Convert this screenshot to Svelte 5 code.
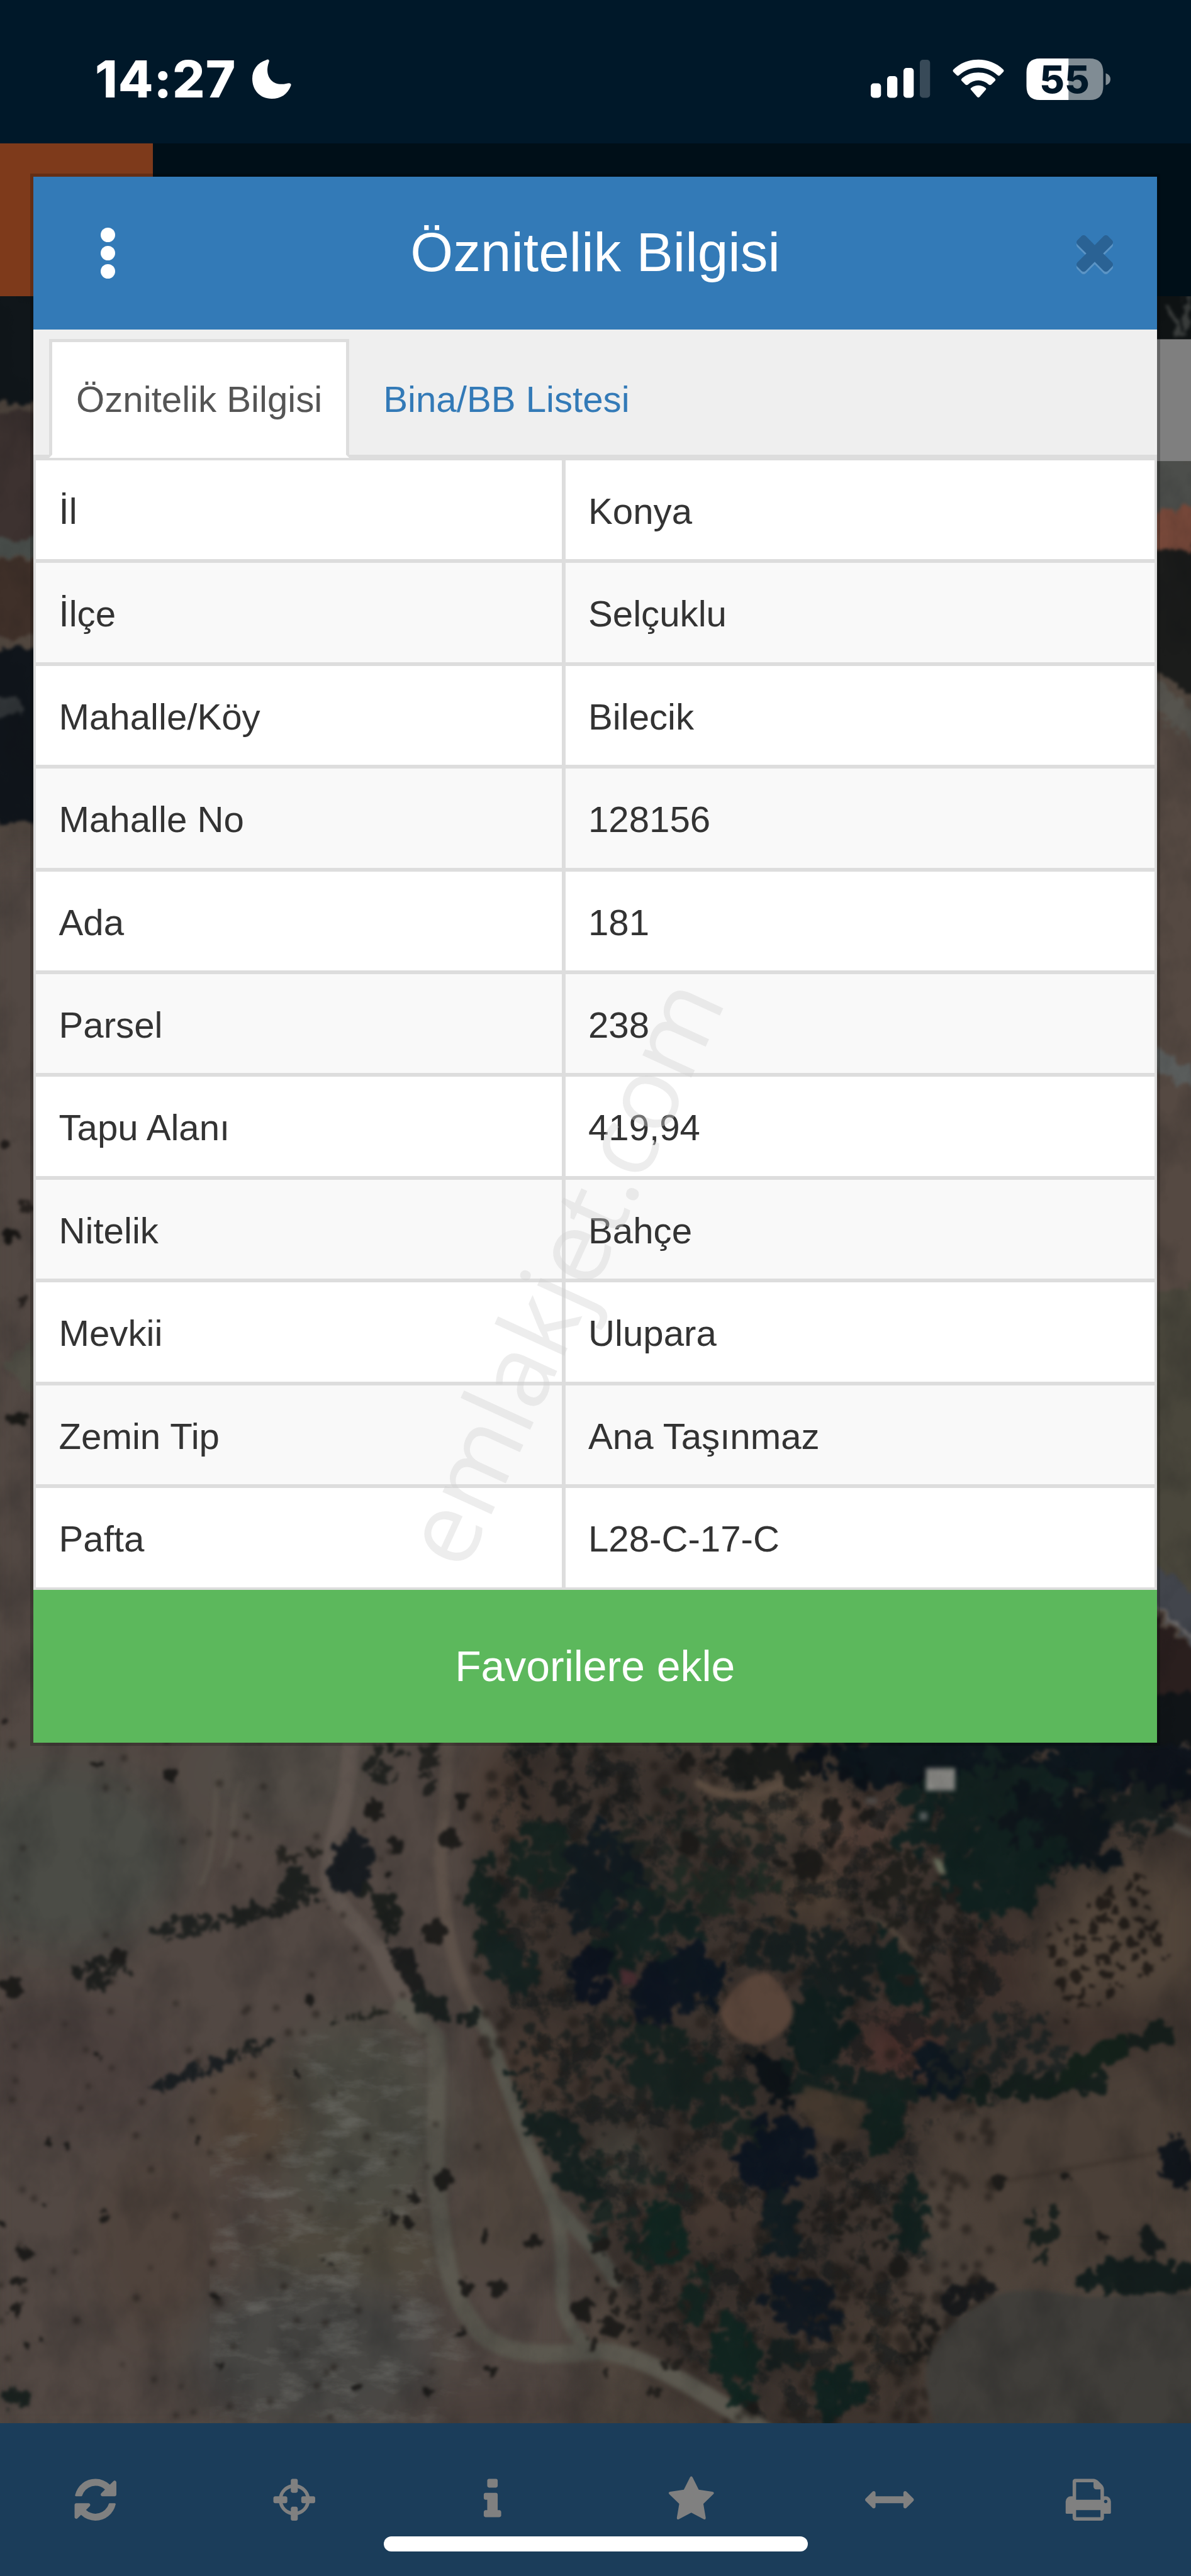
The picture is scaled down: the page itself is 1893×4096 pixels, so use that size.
<script>
    const rows = [
        { label: 'İl', value: 'Konya' },
        { label: 'İlçe', value: 'Selçuklu' },
        { label: 'Mahalle/Köy', value: 'Bilecik' },
        { label: 'Mahalle No', value: '128156' },
        { label: 'Ada', value: '181' },
        { label: 'Parsel', value: '238' },
        { label: 'Tapu Alanı', value: '419,94' },
        { label: 'Nitelik', value: 'Bahçe' },
        { label: 'Mevkii', value: 'Ulupara' },
        { label: 'Zemin Tip', value: 'Ana Taşınmaz' },
        { label: 'Pafta', value: 'L28-C-17-C' }
    ];

    const tools = [
        { name: 'refresh', d: 'M1639 1056q0 5-1 7-64 268-268 434.5t-478 166.5q-146 0-282.5-55t-243.5-157l-129 129q-19 19-45 19t-45-19-19-45v-448q0-26 19-45t45-19h448q26 0 45 19t19 45-19 45l-137 137q71 66 161 102t187 36q134 0 250-65t186-179q11-17 53-117 8-23 30-23h192q13 0 22.5 9.5t9.5 22.5zm25-800v448q0 26-19 45t-45 19h-448q-26 0-45-19t-19-45 19-45l138-138q-148-137-349-137-134 0-250 65t-186 179q-11 17-53 117-8 23-30 23h-199q-13 0-22.5-9.5t-9.5-22.5v-7q65-268 270-434.5t480-166.5q146 0 284 55.5t245 156.5l130-129q19-19 45-19t45 19 19 45z' },
        { name: 'locate', d: 'M1325 1024h-109q-26 0-45-19t-19-45v-128q0-26 19-45t45-19h109q-32-108-112.5-188.5t-188.5-112.5v109q0 26-19 45t-45 19h-128q-26 0-45-19t-19-45v-109q-108 32-188.5 112.5t-112.5 188.5h109q26 0 45 19t19 45v128q0 26-19 45t-45 19h-109q32 108 112.5 188.5t188.5 112.5v-109q0-26 19-45t45-19h128q26 0 45 19t19 45v109q108-32 188.5-112.5t112.5-188.5zm339-192v128q0 26-19 45t-45 19h-143q-37 161-154.5 278.5t-278.5 154.5v143q0 26-19 45t-45 19h-128q-26 0-45-19t-19-45v-143q-161-37-278.5-154.5t-154.5-278.5h-143q-26 0-45-19t-19-45v-128q0-26 19-45t45-19h143q37-161 154.5-278.5t278.5-154.5v-143q0-26 19-45t45-19h128q26 0 45 19t19 45v143q161 37 278.5 154.5t154.5 278.5h143q26 0 45 19t19 45z' },
        { name: 'info', d: 'M1216 1344v128q0 26-19 45t-45 19h-512q-26 0-45-19t-19-45v-128q0-26 19-45t45-19h64v-384h-64q-26 0-45-19t-19-45v-128q0-26 19-45t45-19h384q26 0 45 19t19 45v576h64q26 0 45 19t19 45zm-128-1152v192q0 26-19 45t-45 19h-256q-26 0-45-19t-19-45v-192q0-26 19-45t45-19h256q26 0 45 19t19 45z' },
        { name: 'favorites', d: 'M1728 647q0 22-26 48l-363 354 86 500q1 7 1 20 0 21-10.5 35.5t-30.5 14.5q-19 0-40-12l-449-236-449 236q-22 12-40 12-21 0-31.5-14.5t-10.5-35.5q0-6 2-20l86-500-364-354q-25-27-25-48 0-37 56-46l502-73 225-455q19-41 49-41t49 41l225 455 502 73q56 9 56 46z' },
        { name: 'measure', d: 'M1792 896q0 26-19 45l-256 256q-19 19-45 19t-45-19-19-45v-128h-1024v128q0 26-19 45t-45 19-45-19l-256-256q-19-19-19-45t19-45l256-256q19-19 45-19t45 19 19 45v128h1024v-128q0-26 19-45t45-19 45 19l256 256q19 19 19 45z' },
        { name: 'print', d: 'M448 1536h896v-256h-896v256zm0-640h896v-384h-160q-40 0-68-28t-28-68v-160h-640v640zm1152 64q0-26-19-45t-45-19-45 19-19 45 19 45 45 19 45-19 19-45zm128 0v416q0 13-9.5 22.5t-22.5 9.5h-224v160q0 40-28 68t-68 28h-960q-40 0-68-28t-28-68v-160h-224q-13 0-22.5-9.5t-9.5-22.5v-416q0-79 56.5-135.5t135.5-56.5h64v-544q0-40 28-68t68-28h672q40 0 88 20t76 48l152 152q28 28 48 76t20 88v256h64q79 0 135.5 56.5t56.5 135.5z' }
    ];

    // small seeded generator so the trees are always in the same place
    let seed = 41;
    function random() {
        seed = (seed * 16807) % 2147483647;
        return seed / 2147483647;
    }

    // groves: [cx, cy, rx, ry, angle, count, size, colour]
    const groves = [
        // garden belt east of the tracks
        [1020, 3210, 130, 110, 0, 50, 10, '#1b1c1b'],
        [870, 3400, 22, 90, -5, 44, 14, '#15231f'],
        [915, 3520, 34, 70, -35, 44, 15, '#142220'],
        [970, 3320, 60, 60, 10, 44, 14, '#15231f'],
        [1080, 3370, 70, 100, -10, 90, 17, '#101a20'],
        [1150, 3450, 90, 80, 0, 70, 16, '#122220'],
        [1055, 3535, 34, 44, 0, 40, 16, '#0b121e'],
        [1170, 3570, 40, 50, 0, 44, 16, '#0c1420'],
        [1245, 3540, 44, 60, 0, 50, 17, '#0b1520'],
        [1080, 3700, 150, 110, 30, 80, 9, '#1f2220'],
        [1010, 3850, 30, 140, -32, 80, 14, '#14211f'],
        [1230, 3720, 140, 60, 35, 110, 16, '#15221f'],
        [1390, 3860, 55, 60, -10, 84, 18, '#0b1420'],
        [1390, 3980, 30, 50, 0, 40, 14, '#101c20'],
        [1130, 3930, 90, 80, 0, 50, 10, '#1c2723'],
        [1190, 4000, 32, 50, -20, 38, 13, '#0f2620'],
        [1145, 4030, 22, 24, 0, 18, 12, '#14241f'],
        [1245, 4110, 20, 60, 8, 34, 12, '#12241f'],
        [1320, 4220, 38, 75, -18, 60, 15, '#0f241f'],
        [1430, 4120, 62, 50, 20, 66, 16, '#0e1720'],
        [1502, 4280, 42, 40, 0, 50, 14, '#0f221f'],
        [1405, 4215, 32, 25, 0, 24, 12, '#151f1e'],
        [1460, 4080, 220, 150, 0, 80, 7, '#231f1c'],
        [1540, 3960, 100, 90, 0, 34, 8, '#1e1d1a'],
        [1160, 4150, 110, 110, 0, 50, 9, '#211f1c'],
        [1480, 3500, 120, 60, 10, 100, 14, '#161f1f'],
        [1610, 3530, 26, 70, -28, 46, 14, '#0f201e'],
        [1460, 3640, 42, 60, 30, 60, 17, '#0e1d1c'],
        [1380, 3720, 16, 50, -35, 28, 13, '#0b1217'],
        [1540, 3735, 110, 24, 5, 60, 14, '#13201e'],
        [1680, 3710, 40, 44, 0, 44, 16, '#0c1720'],
        [1585, 3790, 32, 55, 10, 44, 15, '#10221e'],
        [1630, 3980, 26, 62, 0, 40, 14, '#12221f'],
        // dense wood in the north east
        [1600, 3145, 130, 36, 0, 90, 18, '#0a1018'],
        [1800, 3150, 260, 60, 0, 220, 22, '#0b151c'],
        [1790, 3250, 160, 90, 0, 190, 18, '#10211f'],
        [1900, 3270, 100, 80, 0, 90, 18, '#0c141a'],
        [1780, 3350, 110, 70, -15, 110, 17, '#0e201e'],
        [2070, 3160, 80, 50, 30, 80, 18, '#0b111a'],
        [2030, 3230, 90, 40, 10, 50, 13, '#151d1d'],
        [1370, 3155, 90, 30, 0, 50, 13, '#161918'],
        [1230, 3300, 130, 90, 0, 80, 10, '#1f2521'],
        [1290, 3380, 90, 40, 0, 50, 11, '#1f2a23'],
        [1600, 3370, 80, 60, 0, 60, 10, '#1f1f1b'],
        [1690, 3510, 60, 120, -10, 70, 9, '#1f1d1b'],
        [1780, 3660, 110, 70, 0, 70, 12, '#1e2423'],
        [1850, 3735, 120, 18, -4, 60, 13, '#121e1b'],
        [1950, 3690, 80, 16, -32, 60, 13, '#112019'],
        [2065, 3640, 36, 16, -20, 26, 12, '#131d1a'],
        [2110, 3870, 26, 36, 0, 30, 13, '#0d131a'],
        [2040, 4075, 90, 24, 0, 80, 15, '#101c1b'],
        [2055, 4020, 14, 26, 0, 14, 11, '#131a1a'],
        [1860, 3990, 34, 44, 0, 18, 11, '#171f1c'],
        [1720, 4110, 60, 16, -22, 24, 11, '#16181a'],
        [1640, 4190, 24, 56, 28, 24, 10, '#1b1b19'],
        // hedge lines on the western slope
        [630, 3340, 28, 50, -10, 50, 14, '#14191e'],
        [690, 3420, 18, 50, -35, 26, 11, '#1a1e1b'],
        [732, 3520, 18, 46, -28, 28, 11, '#1a1b1b'],
        [785, 3590, 50, 16, 22, 38, 12, '#181f1d'],
        [480, 3415, 80, 14, -10, 44, 10, '#1c1f1d'],
        [530, 3370, 30, 26, -10, 28, 11, '#1c201e'],
        [535, 3315, 30, 12, -10, 12, 9, '#24231f'],
        [330, 3450, 50, 18, -12, 24, 9, '#1e211f'],
        [180, 3525, 44, 26, -10, 26, 10, '#1d1f1d'],
        [340, 3710, 76, 9, -20, 40, 9, '#181d20'],
        [440, 3670, 38, 9, -18, 18, 8, '#1d201f'],
        [690, 3155, 34, 30, 0, 20, 10, '#1f211e'],
        [765, 3150, 16, 50, 0, 20, 10, '#22221f'],
        [640, 3610, 66, 7, -8, 18, 5, '#22241f'],
        [25, 4290, 22, 18, 0, 16, 9, '#17201d']
    ];

    const singles = [
        [305, 3172, 12], [173, 3157, 9], [18, 3554, 18], [213, 3502, 16], [668, 3235, 17],
        [806, 3292, 15], [826, 3226, 14], [775, 3459, 21], [707, 3304, 15], [695, 3352, 8],
        [552, 3578, 12], [178, 3679, 6], [530, 3711, 6], [356, 3826, 9], [83, 3829, 7],
        [122, 3837, 7], [792, 3900, 16], [743, 3932, 10], [728, 3975, 10], [701, 3968, 8],
        [870, 4000, 8], [959, 4007, 14], [836, 4089, 13], [890, 4094, 17], [1038, 4132, 20],
        [42, 4034, 12], [30, 4085, 8], [28, 4131, 9], [50, 4190, 8], [76, 4190, 6],
        [182, 3963, 7], [386, 4105, 7], [578, 4041, 5], [594, 4060, 5], [394, 4233, 6],
        [821, 4175, 8], [770, 4276, 10], [641, 4272, 9], [880, 4238, 8], [1095, 4165, 17],
        [1076, 4018, 13], [1444, 3336, 27], [1489, 3240, 19], [1395, 3333, 9], [1486, 3296, 9],
        [1226, 3155, 18], [1232, 3300, 20], [1262, 3214, 8], [1606, 4055, 16], [1498, 3848, 13],
        [1786, 3904, 11], [1907, 3896, 9], [1972, 4002, 8], [1554, 4182, 8], [1345, 4306, 12],
        [80, 3940, 6], [5, 3978, 9], [1550, 3250, 12], [1530, 3230, 10], [1575, 3265, 9]
    ];

    const trees = [];
    for (const [cx, cy, rx, ry, angle, count, size, fill] of groves) {
        const a = (angle * Math.PI) / 180;
        for (let i = 0; i < count; i++) {
            const t = random() * Math.PI * 2;
            const q = Math.sqrt(random()) * (0.7 + random() * 0.65);
            const dx = Math.cos(t) * q * rx;
            const dy = Math.sin(t) * q * ry;
            trees.push({
                x: Math.round(cx + dx * Math.cos(a) - dy * Math.sin(a)),
                y: Math.round(cy + dx * Math.sin(a) + dy * Math.cos(a)),
                r: Math.round(size * (0.35 + random() * 0.75)),
                fill
            });
        }
    }
    for (const [x, y, r] of singles) {
        trees.push({ x, y, r, fill: '#1b1a18' });
    }

    // orchard planted in slanted rows
    for (let i = 0; i < 6; i++) {
        for (let j = 0; j < 8; j++) {
            trees.push({
                x: Math.round(1866 + j * 24 + i * 8 + random() * 14),
                y: Math.round(3455 - j * 15 + i * 29 + random() * 14),
                r: Math.round(5 + random() * 6),
                fill: '#211c18'
            });
        }
    }

    // scrub, sparse on the fields and thick in the gardens
    const scrub = [];
    for (let i = 0; i < 110; i++) {
        scrub.push({ x: Math.round(random() * 860), y: Math.round(3110 + random() * 1230), r: Math.round(1 + random() * 3) });
    }
    for (let i = 0; i < 650; i++) {
        const y = 3110 + random() * 1230;
        const left = y < 3640 ? 850 : 850 + (y - 3640) * 0.62;
        const x = left + random() * (1780 - left);
        scrub.push({ x: Math.round(x), y: Math.round(y), r: Math.round(3 + random() * 6) });
    }
</script>

<div class="screen">
    <header class="status">
        <div class="clock">
            <span class="time">14:27</span>
            <svg class="moon" viewBox="0 0 62 63">
                <path d="M22 1.500C26-1 28 2 26 6C19 26 31 44 54 39C60 37 63 39 61 43C56 56 45 63 31 63C12 63 0 49 0 31C0 17 8 6 22 1.500Z" fill="#fff" />
            </svg>
        </div>
        <svg class="indicators" viewBox="0 0 382 68">
            <g fill="#fff">
                <rect x="0" y="40.500" width="16.300" height="23" rx="5" />
                <rect x="26" y="29" width="16.300" height="34.500" rx="5" />
                <rect x="52" y="16" width="16.300" height="47.500" rx="5" />
                <rect x="78" y="3" width="16.300" height="60.500" rx="5" opacity=".22" />
                <path d="M131.500 22.500Q129.500 20.500 131.500 18.500C153-2.500 189-2.500 210.500 18.500Q212.500 20.500 210.500 22.500L205.500 27.500Q203.500 29.500 201.500 27.500C184 11.500 158 11.500 140.500 27.500Q138.500 29.500 136.500 27.500Z" />
                <path d="M144.500 36.500Q143 34.500 145 32.500C159 20 183 20 197 32.500Q199 34.500 197.500 36.500L191.500 42.500Q189.500 44 187.500 42.500C178 33.500 164 33.500 154.500 42.500Q152.500 44 150.500 42.500Z" />
                <path d="M159.500 51Q157.500 49 160 47.500C167 42.500 175 42.500 182 47.500Q184.500 49 182.500 51L173 62Q171 64 169 62Z" />
                <path d="M269 1H314.500V67H269Q247.500 67 247.500 45V23Q247.500 1 269 1Z" />
                <path d="M314.500 1H348Q369.500 1 369.500 23V45Q369.500 67 348 67H314.500Z" opacity=".5" />
                <path d="M373.500 24.500Q381 27 381 34Q381 41 373.500 43.500Z" opacity=".5" />
            </g>
            <text x="308" y="56" text-anchor="middle" class="battery">55</text>
        </svg>
    </header>

    <div class="navbar">
        <div class="brand"></div>
    </div>

    <main class="map">
        <svg viewBox="0 529 2130 3806" preserveAspectRatio="none">
            <defs>
                <filter id="rough" x="-5%" y="-5%" width="110%" height="110%" color-interpolation-filters="sRGB">
                    <feTurbulence type="fractalNoise" baseFrequency="0.045" numOctaves="3" seed="4" result="n" />
                    <feDisplacementMap in="SourceGraphic" in2="n" scale="34" xChannelSelector="R" yChannelSelector="G" />
                    <feGaussianBlur stdDeviation="2.800" />
                </filter>
                <filter id="soft" x="-20%" y="-20%" width="140%" height="140%" color-interpolation-filters="sRGB">
                    <feGaussianBlur stdDeviation="38" />
                </filter>
                <filter id="edge" x="-20%" y="-20%" width="140%" height="140%" color-interpolation-filters="sRGB">
                    <feGaussianBlur stdDeviation="4" />
                </filter>
                <filter id="grain" x="0" y="0" width="100%" height="100%" color-interpolation-filters="sRGB">
                    <feTurbulence type="fractalNoise" baseFrequency="0.012 0.009" numOctaves="5" seed="9" />
                    <feColorMatrix values="0 0 0 0 0.04  0 0 0 0 0.05  0 0 0 0 0.06  1.6 0 0 0 -0.65" />
                </filter>
                <filter id="thicket" x="0" y="0" width="100%" height="100%" color-interpolation-filters="sRGB">
                    <feTurbulence type="fractalNoise" baseFrequency="0.02" numOctaves="4" seed="15" />
                    <feColorMatrix values="0 0 0 0 0.065  0 0 0 0 0.095  0 0 0 0 0.1  0 5 0 0 -2.5" result="c" />
                    <feGaussianBlur in="SourceAlpha" stdDeviation="14" result="m" />
                    <feComposite in="c" in2="m" operator="in" />
                </filter>
                <filter id="chalk" x="0" y="0" width="100%" height="100%" color-interpolation-filters="sRGB">
                    <feTurbulence type="fractalNoise" baseFrequency="0.014 0.032" numOctaves="5" seed="21" />
                    <feColorMatrix values="0 0 0 0 0.45  0 0 0 0 0.45  0 0 0 0 0.43  0 3 0 0 -1.450" result="c" />
                    <feGaussianBlur in="SourceAlpha" stdDeviation="20" result="m" />
                    <feComposite in="c" in2="m" operator="in" />
                </filter>
            </defs>

            <rect x="0" y="529" width="2130" height="3806" fill="#51473f" />

            <g filter="url(#soft)">
                <rect x="-60" y="1500" width="1100" height="2900" fill="#524843" />
                <ellipse cx="100" cy="3320" rx="230" ry="170" fill="#4b4c46" />
                <ellipse cx="500" cy="3170" rx="170" ry="110" fill="#524c46" />
                <ellipse cx="120" cy="3700" rx="200" ry="120" fill="#4c413e" />
                <ellipse cx="640" cy="3800" rx="160" ry="190" fill="#4c4b43" />
                <ellipse cx="450" cy="3790" rx="85" ry="90" fill="#524438" />
                <ellipse cx="640" cy="4030" rx="190" ry="60" fill="#4e483c" />
                <ellipse cx="560" cy="4210" rx="220" ry="150" fill="#484744" />
                <ellipse cx="280" cy="4010" rx="120" ry="170" fill="#4f433c" />
                <ellipse cx="910" cy="3900" rx="70" ry="180" fill="#4e443c" />
                <path d="M880 3100H2180V3800L1600 3900L1700 4400H1230L1120 4130L960 3780L850 3540Z" fill="#3c332e" />
                <ellipse cx="900" cy="3220" rx="60" ry="120" fill="#473931" />
                <ellipse cx="960" cy="3690" rx="90" ry="60" fill="#463830" />
                <ellipse cx="1400" cy="3220" rx="130" ry="60" fill="#52453a" />
                <ellipse cx="1540" cy="3290" rx="80" ry="70" fill="#533f37" />
                <ellipse cx="1450" cy="3390" rx="60" ry="40" fill="#564637" />
                <ellipse cx="1610" cy="3660" rx="80" ry="50" fill="#50302c" />
                <ellipse cx="1780" cy="3520" rx="80" ry="90" fill="#3e302b" />
                <path d="M1640 3800L1720 3750L2140 3640V4080H1870L1780 4120L1700 3960Z" fill="#4b4038" />
                <path d="M1830 3500L2000 3300L2150 3380V3540L1900 3650Z" fill="#53463b" />
                <ellipse cx="1960" cy="3630" rx="100" ry="26" fill="#3b2c28" />
                <ellipse cx="1270" cy="3950" rx="80" ry="90" fill="#443730" />
                <ellipse cx="1560" cy="4200" rx="100" ry="90" fill="#453a32" />
                <ellipse cx="1110" cy="3860" rx="50" ry="50" fill="#4b4a42" />
                <ellipse cx="1180" cy="4330" rx="200" ry="40" fill="#473e37" />
                <ellipse cx="900" cy="4320" rx="160" ry="36" fill="#463c38" />
            </g>

            <path d="M880 3110H1500L1700 3120L2130 3120V3280L1850 3400L1830 3740L1640 3820L1660 4080L1600 4335H1330L1110 4080L950 3740L860 3520Z" filter="url(#thicket)" opacity=".6" />

            <g fill="none" stroke-linecap="round" filter="url(#edge)">
                <path d="M628 3080C630 3210 596 3270 587 3347C588 3400 640 3440 679 3490C700 3540 730 3600 781 3642" stroke="#5f554f" stroke-width="30" />
                <path d="M720 3590Q760 3620 781 3650C786 3740 770 3860 788 3977C800 4080 815 4120 860 4175C900 4210 960 4217 1065 4206C1140 4205 1240 4270 1370 4350" stroke="#5b584f" stroke-width="32" />
                <path d="M801 3090C800 3220 786 3280 788 3339C795 3410 800 3460 811 3498C830 3580 870 3620 876 3642" stroke="#5d5149" stroke-width="22" />
                <path d="M850 3600Q870 3630 876 3642C900 3720 950 3860 985 3929C1015 4010 1000 4080 1008 4128C1020 4170 1040 4190 1062 4208" stroke="#5a584f" stroke-width="24" />
                <path d="M985 3935C1030 3990 1060 4010 1100 4080" stroke="#54534b" stroke-width="26" />
                <path d="M1510 3422C1600 3425 1640 3490 1670 3600" stroke="#51463c" stroke-width="9" />
                <path d="M1250 3190C1330 3240 1390 3190 1450 3170" stroke="#5b4c40" stroke-width="15" />
                <path d="M390 3180C380 3260 385 3330 360 3370M428 3190C410 3240 425 3290 400 3340" stroke="#5c554d" stroke-width="6" />
                <path d="M2040 3240L2130 3280M2080 3110L2140 3150" stroke="#55514b" stroke-width="13" />
                <path d="M1770 3905C1850 3895 1950 3870 2080 3850" stroke="#3d332c" stroke-width="5" />
            </g>

            <path d="M375 3860L560 3640L760 3630L770 4000L790 4130L860 4240L780 4335H375Z" filter="url(#chalk)" opacity=".5" />

            <g fill="#241f1b" opacity=".62" filter="url(#edge)">
                {#each scrub as s}
                    <circle cx={s.x} cy={s.y} r={s.r + 3} />
                {/each}
            </g>

            <g filter="url(#rough)" opacity=".93">
                {#each trees as tree}
                    <circle cx={tree.x} cy={tree.y} r={tree.r} fill={tree.fill} />
                {/each}
            </g>

            <path d="M1289 3600C1295 3565 1340 3525 1375 3530C1395 3540 1405 3570 1418 3590C1425 3620 1390 3650 1350 3658C1315 3650 1289 3630 1289 3600Z" fill="#59453a" filter="url(#edge)" />
            <path d="M1440 3730L1550 3760L1530 3830L1470 3820L1425 3770Z" fill="#463a2f" opacity=".8" filter="url(#edge)" />
            <path d="M1675 4345C1652 4270 1650 4230 1670 4200C1690 4160 1740 4125 1785 4105C1850 4086 1900 4105 1948 4110L2140 4103V4345Z" fill="#403e3a" filter="url(#edge)" />

            <!-- buildings in the wood -->
            <g filter="url(#edge)">
                <rect x="1656" y="3163" width="52" height="40" fill="#8d8c88" />
                <path d="M1668 3324L1682 3326L1692 3352L1680 3352Z" fill="#6d7360" />
                <rect x="1645" y="3242" width="14" height="14" fill="#5a5f5f" />
                <rect x="1548" y="3215" width="20" height="12" fill="#5a5450" />
                <path d="M1108 3520L1135 3528L1140 3548L1112 3552Z" fill="#4f3034" />
            </g>

            <!-- strip left of the dialog -->
            <g filter="url(#rough)">
                <rect x="-30" y="500" width="120" height="220" fill="#10161a" />
                <rect x="-30" y="735" width="120" height="230" fill="#3d3230" />
                <rect x="-30" y="965" width="120" height="30" fill="#474c49" />
                <rect x="-30" y="1000" width="120" height="140" fill="#3f3029" />
                <rect x="-30" y="1160" width="120" height="310" fill="#10151b" />
                <ellipse cx="5" cy="1265" rx="36" ry="20" fill="#33373a" />
                <ellipse cx="10" cy="2050" rx="10" ry="8" fill="#201c1a" />
                <ellipse cx="20" cy="2210" rx="13" ry="11" fill="#181614" />
                <ellipse cx="50" cy="2160" rx="10" ry="7" fill="#26211e" />
                <ellipse cx="40" cy="2325" rx="12" ry="8" fill="#26211e" />
                <ellipse cx="32" cy="2537" rx="18" ry="12" fill="#1b1a17" />
                <path d="M0 2440L60 2400V2500Z" fill="#504e45" />
                <ellipse cx="10" cy="3085" rx="8" ry="6" fill="#24201e" />
            </g>

            <!-- strip right of the dialog -->
            <g filter="url(#rough)">
                <rect x="2040" y="490" width="120" height="130" fill="#0f1314" />
                <path d="M2090 540L2110 600M2120 530V590" stroke="#3a3d3c" stroke-width="10" />
                <rect x="2050" y="815" width="110" height="99" fill="#4c4e4b" />
                <path d="M2050 915L2150 900V975L2050 990Z" fill="#7a4a3b" />
                <path d="M2050 990L2150 975V1250L2050 1190Z" fill="#1b1c1b" />
                <path d="M2050 1190L2150 1290V1350L2050 1250Z" fill="#56544e" />
                <path d="M2050 1250L2150 1350V2290L2050 2340Z" fill="#554942" />
                <path d="M2050 1860L2150 1925V1960L2050 1900Z" fill="#5a5d5c" />
                <path d="M2050 2320L2150 2290V2860L2050 2790Z" fill="#4a473c" />
                <path d="M2050 2790L2150 2860V2960L2050 2860Z" fill="#42454c" />
                <path d="M2050 2860L2150 2946" stroke="#6b6868" stroke-width="7" />
                <path d="M2050 2880L2150 2960V3030L2050 3040Z" fill="#2a1f1e" />
                <rect x="2050" y="3030" width="110" height="90" fill="#101417" />
            </g>

            <rect x="0" y="529" width="2130" height="3806" filter="url(#grain)" opacity=".28" />
            <rect x="2060" y="606" width="80" height="218" fill="#7f7f7f" />
        </svg>
    </main>

    <nav class="toolbar">
        {#each tools as tool}
            <button aria-label={tool.name}>
                <svg viewBox="0 0 1792 1792"><path d={tool.d} /></svg>
            </button>
        {/each}
    </nav>

    <div class="home-indicator"></div>

    <section class="dialog">
        <div class="dialog-header">
            <button class="menu" aria-label="menu"><i></i><i></i><i></i></button>
            <h1>Öznitelik Bilgisi</h1>
            <button class="close" aria-label="close">
                <svg viewBox="302 366 1188 1188">
                    <path d="M1490 1322q0 40-28 68l-136 136q-28 28-68 28t-68-28l-294-294-294 294q-28 28-68 28t-68-28l-136-136q-28-28-28-68t28-68l294-294-294-294q-28-28-28-68t28-68l136-136q28-28 68-28t68 28l294 294 294-294q28-28 68-28t68 28l136 136q28 28 28 68t-28 68l-294 294 294 294q28 28 28 68z" />
                </svg>
            </button>
        </div>

        <div class="tabs">
            <div class="tab active">Öznitelik Bilgisi</div>
            <div class="tab">Bina/BB Listesi</div>
        </div>

        <div class="table">
            {#each rows as row}
                <div class="row">
                    <div class="cell label">{row.label}</div>
                    <div class="cell">{row.value}</div>
                </div>
            {/each}
        </div>

        <button class="favorite">Favorilere ekle</button>
    </section>

    <svg class="watermark" viewBox="0 0 1893 4096">
        <text transform="translate(738 2502) rotate(-65.4)">emlakjet.com</text>
    </svg>
</div>

<style>
    :global(body) {
        background: #001829;
    }

    .screen {
        position: relative;
        display: flex;
        flex-direction: column;
        width: 1893px;
        height: 4096px;
        overflow: hidden;
        font-family: "Liberation Sans", Arial, sans-serif;
        color: #333;
    }

    button {
        padding: 0;
        border: none;
        background: none;
        font-family: inherit;
    }

    .status {
        display: flex;
        justify-content: space-between;
        align-items: flex-start;
        height: 227.5px;
        box-sizing: border-box;
        padding: 92px 127px 0 151px;
        background: #001829;
    }

    .clock {
        display: flex;
        align-items: flex-start;
    }

    .time {
        width: 250px;
        margin-top: -14px;
        font: 800 81px/97px Inter, sans-serif;
        letter-spacing: 1px;
        color: #fff;
    }

    .moon {
        width: 62px;
        height: 63px;
        margin-top: 2px;
    }

    .indicators {
        width: 382px;
        height: 68px;
        overflow: visible;
    }

    .battery {
        font: 800 61px Inter, sans-serif;
        fill: #001829;
    }

    .navbar {
        height: 243px;
        background: #000f18;
    }

    .brand {
        width: 242.5px;
        height: 100%;
        background: #7e3a1b;
    }

    .map {
        flex: 1;
        min-height: 0;
        overflow: hidden;
    }

    .map svg {
        display: block;
        width: 100%;
        height: 100%;
    }

    .toolbar {
        display: flex;
        height: 243.5px;
        box-sizing: border-box;
        background: #1b3d5a;
    }

    .toolbar button {
        flex: 1;
        padding-right: 12px;
    }

    .toolbar svg {
        display: block;
        width: 77.5px;
        height: 77.5px;
        margin: 0 auto;
        fill: #808080;
    }

    .home-indicator {
        position: absolute;
        left: 609.5px;
        bottom: 39px;
        width: 674.5px;
        height: 24.5px;
        border-radius: 13px;
        background: #fff;
    }

    .dialog {
        position: absolute;
        top: 281px;
        left: 53px;
        width: 1785.5px;
        background: #fff;
        box-shadow: 0 0 0 5px rgba(0, 0, 0, 0.2);
    }

    .dialog-header {
        display: flex;
        justify-content: space-between;
        align-items: center;
        height: 243px;
        box-sizing: border-box;
        padding: 0 69px 0 106.5px;
        background: #337ab7;
    }

    .menu {
        display: flex;
        flex-direction: column;
        gap: 6px;
        width: 57px;
    }

    .menu i {
        width: 23px;
        height: 23px;
        border-radius: 50%;
        background: #fff;
    }

    h1 {
        margin: 0 0 2px -36px;
        font-size: 87.4px;
        font-weight: 400;
        color: #fff;
    }

    .close svg {
        display: block;
        width: 58px;
        height: 58px;
        fill: #2a6294;
        overflow: visible;
        filter: drop-shadow(0 4px 0 rgba(255, 255, 255, 0.2));
    }

    .tabs {
        display: flex;
        height: 204px;
        box-sizing: border-box;
        padding: 15px 0 0 25px;
        border-bottom: 5px solid #ddd;
        background: #efefef;
    }

    .tab {
        height: 189px;
        box-sizing: border-box;
        padding: 0 38px;
        border: 5px solid transparent;
        margin-right: 11px;
        font-size: 58.2px;
        line-height: 181px;
        color: #337ab7;
        white-space: nowrap;
    }

    .tab.active {
        border-color: #ddd;
        border-bottom-color: #fff;
        background: #fff;
        color: #555;
    }

    .table {
        border: 4.5px solid #ddd;
        border-bottom: 0;
        font-size: 58.2px;
    }

    .row {
        display: grid;
        grid-template-columns: 841.5px 1fr;
        height: 163.4px;
        box-sizing: border-box;
        border-bottom: 6px solid #ddd;
    }

    .row:nth-child(even) {
        background: #f9f9f9;
    }

    .row:last-child {
        height: 161.6px;
        border-bottom-width: 4px;
    }

    .cell {
        padding: 2px 0 0 36.5px;
        line-height: 157px;
    }

    .label {
        border-right: 6.5px solid #ddd;
    }

    .favorite {
        display: block;
        width: 100%;
        height: 243px;
        background: #5cb85c;
        color: #fff;
        font-size: 67.9px;
    }

    .watermark {
        position: absolute;
        inset: 0;
        width: 1893px;
        height: 4096px;
        pointer-events: none;
    }

    .watermark text {
        font: 400 160px "Open Sans", "Noto Sans", sans-serif;
        fill: rgba(210, 210, 210, 0.4);
    }
</style>
